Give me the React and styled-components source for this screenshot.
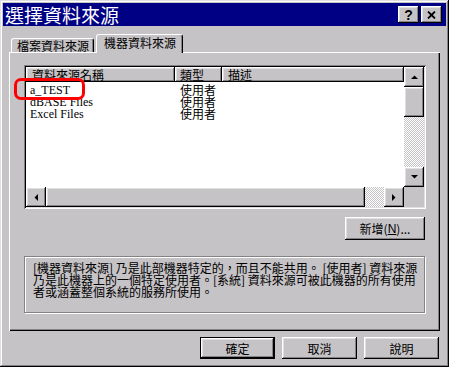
import React from 'react';
import styled, { createGlobalStyle } from 'styled-components';

const GlobalStyle = createGlobalStyle`
    body {
        margin: 0;
        background: #c6c3c6;
    }
`;

const cjk = `"Noto Sans CJK TC", "Noto Sans CJK SC", sans-serif`;

const raised = `
    box-shadow: inset -1px -1px #000, inset 1px 1px #fff, inset -2px -2px #848284, inset 2px 2px #dfdfdf;
`;

const Window = styled.div`
    position: relative;
    width: 449px;
    height: 367px;
    box-sizing: border-box;
    padding: 3px;
    background: #c6c3c6;
    box-shadow: inset -1px -1px #000, inset 1px 1px #dfdfdf, inset -2px -2px #848284, inset 2px 2px #fff;
    display: flex;
    flex-direction: column;
    font-family: ${cjk};
    color: #000;
`;

const TitleBar = styled.div`
    height: 23px;
    background: #000084;
    display: flex;
    align-items: center;
    gap: 2px;
    padding: 0 4px 0 2px;
`;

const Title = styled.div`
    flex: 1;
    color: #fff;
    font-size: 19px;
    line-height: 23px;
    white-space: nowrap;
`;

const TitleButton = styled.div`
    width: 21px;
    height: 17px;
    box-sizing: border-box;
    background: #c6c3c6;
    ${raised}
    display: flex;
    align-items: center;
    justify-content: center;
    font-family: "Liberation Sans", sans-serif;
    font-weight: bold;
    font-size: 14px;
    line-height: 14px;
`;

const Body = styled.div`
    flex: 1;
    display: flex;
    flex-direction: column;
    padding: 8px 6px 5px 6px;
    min-height: 0;
`;

const TabStrip = styled.div`
    display: flex;
    align-items: flex-end;
    height: 18px;
    padding-left: 2px;
    position: relative;
    z-index: 1;
`;

const Tab = styled.div`
    box-sizing: border-box;
    height: ${(p) => (p.$active ? '19px' : '14px')};
    margin-left: ${(p) => (p.$active ? '2px' : '0')};
    margin-bottom: ${(p) => (p.$active ? '-1px' : '0')};
    padding: ${(p) => (p.$active ? '1px 6px 0 7px' : '1px 4px 0 5px')};
    background: #c6c3c6;
    border-top: 1px solid #fff;
    border-left: 1px solid #fff;
    border-right: 1px solid #000;
    border-radius: 3px 3px 0 0;
    box-shadow: inset -1px 0 #848284;
    font-size: 12px;
    line-height: ${(p) => (p.$active ? '14px' : '12px')};
    white-space: nowrap;
`;

const Panel = styled.div`
    flex: 1;
    display: flex;
    flex-direction: column;
    padding: 13px 14px 0 15px;
    box-shadow: inset 1px 1px #fff, inset -1px -1px #000, inset -2px -2px #848284;
`;

const ListView = styled.div`
    height: 144px;
    box-sizing: border-box;
    padding: 2px;
    background: #fff;
    box-shadow: inset 1px 1px #848284, inset -1px -1px #fff, inset 2px 2px #000, inset -2px -2px #dfdfdf;
    display: grid;
    grid-template-columns: 1fr 20px;
    grid-template-rows: 1fr 20px;
`;

const ListBody = styled.div`
    overflow: hidden;
    background: #fff;
`;

const columns = `
    display: grid;
    grid-template-columns: 149px 47px 1fr;
`;

const Header = styled.div`
    ${columns}
    height: 15px;
`;

const HeaderCell = styled.div`
    background: #c6c3c6;
    ${raised}
    padding-left: ${(p) => p.$pad || 6}px;
    font-size: 12px;
    line-height: 15px;
    overflow: hidden;
    white-space: nowrap;
`;

const Rows = styled.div`
    padding-top: 2px;
`;

const Row = styled.div`
    ${columns}
    height: 12px;
    font-size: 12px;
    line-height: 12px;
`;

const NameCell = styled.div`
    padding-left: 4px;
    font-family: "Liberation Serif", serif;
    white-space: nowrap;
`;

const TypeCell = styled.div`
    padding-left: 5px;
    white-space: nowrap;
`;

const VScroll = styled.div`
    display: flex;
    flex-direction: column;
`;

const HScroll = styled.div`
    display: flex;
`;

const ScrollButton = styled.div`
    width: 20px;
    height: 20px;
    flex: none;
    box-sizing: border-box;
    background: #c6c3c6;
    ${raised}
    display: flex;
    align-items: center;
    justify-content: center;
`;

const Thumb = styled.div`
    flex: none;
    width: ${(p) => p.$w || '20px'};
    height: ${(p) => p.$h || '20px'};
    background: #c6c3c6;
    ${raised}
`;

const Track = styled.div`
    flex: 1;
    background-color: #c6c3c6;
    background-image: conic-gradient(#fff 25%, #c6c3c6 0 50%, #fff 0 75%, #c6c3c6 0);
    background-size: 2px 2px;
`;

const Corner = styled.div`
    background: #c6c3c6;
`;

const ActionRow = styled.div`
    display: flex;
    justify-content: flex-end;
    margin-top: 8px;
    padding-right: 1px;
`;

const Button = styled.div`
    width: ${(p) => p.$w || 75}px;
    height: ${(p) => p.$h || 22}px;
    box-sizing: border-box;
    background: #c6c3c6;
    border: ${(p) => (p.$default ? '1px solid #000' : 'none')};
    ${raised}
    display: flex;
    align-items: center;
    justify-content: center;
    font-size: 12px;
    white-space: nowrap;

    u {
        text-decoration: underline;
        font-family: "Liberation Sans", sans-serif;
    }
`;

const GroupBox = styled.div`
    margin-top: 16px;
    margin-right: 1px;
    height: 57px;
    box-sizing: border-box;
    border: 1px solid #848284;
    box-shadow: 1px 1px #fff, inset 1px 1px #fff;
    padding: 5px 0 0 8px;
    font-size: 12px;
    line-height: 12px;
    white-space: nowrap;
`;

const Footer = styled.div`
    display: flex;
    justify-content: flex-end;
    gap: 7px;
    margin-top: 6px;
    padding-right: 1px;
`;

const Highlight = styled.div`
    position: absolute;
    left: 14px;
    top: 78px;
    width: 71px;
    height: 22px;
    box-sizing: border-box;
    border: 3px solid #f00;
    border-radius: 7px;
    pointer-events: none;
`;

const Arrow = ({ dir }) => {
    const pts = {
        up: '0,4 7,4 3.5,0.5',
        down: '0,0 7,0 3.5,3.5',
        left: '4,0 4,7 0.5,3.5',
        right: '0,0 0,7 3.5,3.5',
    }[dir];
    const vertical = dir === 'up' || dir === 'down';
    return (
        <svg width={vertical ? 7 : 4} height={vertical ? 4 : 7} viewBox={vertical ? '0 0 7 4' : '0 0 4 7'}>
            <polygon points={pts} fill="#000" />
        </svg>
    );
};

const rows = [
    { name: 'a_TEST', type: '使用者' },
    { name: 'dBASE Files', type: '使用者' },
    { name: 'Excel Files', type: '使用者' },
];

const App = () => {
    return (
        <>
            <GlobalStyle />
            <Window>
                <TitleBar>
                    <Title>選擇資料來源</Title>
                    <TitleButton>?</TitleButton>
                    <TitleButton>
                        <svg width="9" height="8" viewBox="0 0 9 8">
                            <path d="M1 0.5 L8 7.5 M8 0.5 L1 7.5" stroke="#000" strokeWidth="1.8" />
                        </svg>
                    </TitleButton>
                </TitleBar>
                <Body>
                    <TabStrip>
                        <Tab>檔案資料來源</Tab>
                        <Tab $active>機器資料來源</Tab>
                    </TabStrip>
                    <Panel>
                        <ListView>
                            <ListBody>
                                <Header>
                                    <HeaderCell>資料來源名稱</HeaderCell>
                                    <HeaderCell $pad={5}>類型</HeaderCell>
                                    <HeaderCell>描述</HeaderCell>
                                </Header>
                                <Rows>
                                    {rows.map((r) => (
                                        <Row key={r.name}>
                                            <NameCell>{r.name}</NameCell>
                                            <TypeCell>{r.type}</TypeCell>
                                            <div />
                                        </Row>
                                    ))}
                                </Rows>
                            </ListBody>
                            <VScroll>
                                <ScrollButton><Arrow dir="up" /></ScrollButton>
                                <Thumb $h="30px" />
                                <Track />
                                <ScrollButton><Arrow dir="down" /></ScrollButton>
                            </VScroll>
                            <HScroll>
                                <ScrollButton><Arrow dir="left" /></ScrollButton>
                                <Thumb $w="319px" />
                                <Track />
                                <ScrollButton><Arrow dir="right" /></ScrollButton>
                            </HScroll>
                            <Corner />
                        </ListView>
                        <ActionRow>
                            <Button $w={80} $h={23}>新增(<u>N</u>)...</Button>
                        </ActionRow>
                        <GroupBox>
                            [機器資料來源] 乃是此部機器特定的，而且不能共用。 [使用者] 資料來源<br />
                            乃是此機器上的一個特定使用者。[系統] 資料來源可被此機器的所有使用<br />
                            者或涵蓋整個系統的服務所使用。
                        </GroupBox>
                    </Panel>
                    <Footer>
                        <Button $default>確定</Button>
                        <Button>取消</Button>
                        <Button>說明</Button>
                    </Footer>
                </Body>
                <Highlight />
            </Window>
        </>
    );
};

export default App;
